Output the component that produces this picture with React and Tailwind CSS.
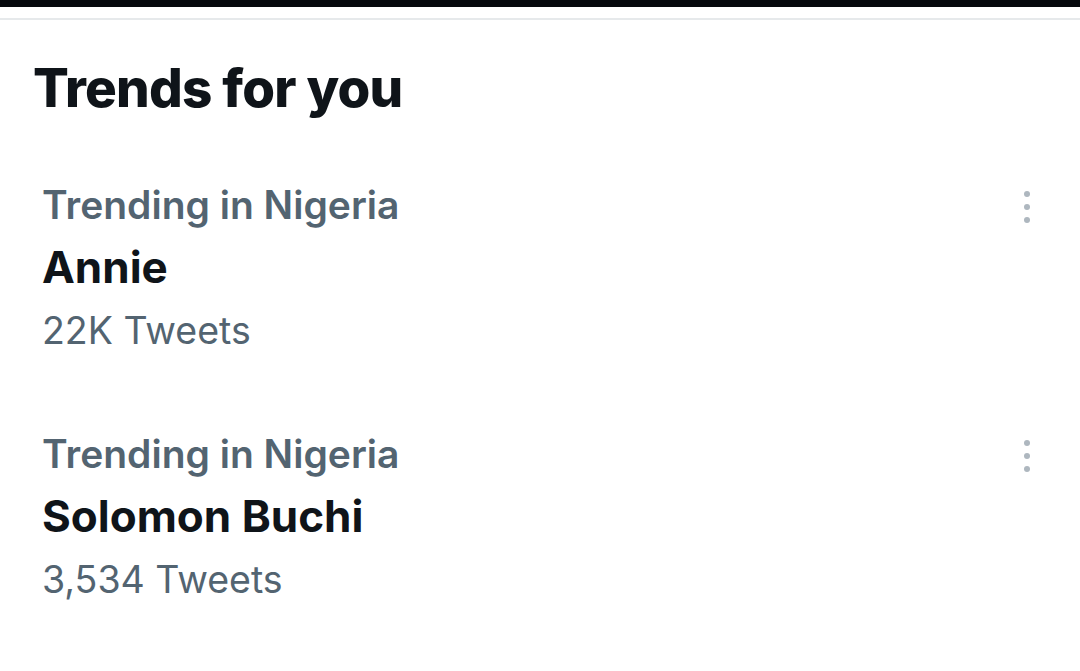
import React from 'react'

const trends = [
    { context: 'Trending in Nigeria', name: 'Annie', count: '22K Tweets' },
    { context: 'Trending in Nigeria', name: 'Solomon Buchi', count: '3,534 Tweets' },
]

const MoreDots = () => (
    <div className="flex flex-col items-center gap-[7px] pt-[18px]">
        <span className="w-[6px] h-[6px] rounded-full bg-[#aeb7bf]" />
        <span className="w-[6px] h-[6px] rounded-full bg-[#aeb7bf]" />
        <span className="w-[6px] h-[6px] rounded-full bg-[#aeb7bf]" />
    </div>
)

const TrendItem = ({ context, name, count }) => (
    <div className="flex items-start justify-between pl-[42px] pr-[50px] h-[249px]">
        <div className="flex flex-col">
            <span className="text-[39px] leading-[63px] font-semibold text-[#536471]">{context}</span>
            <span className="text-[44px] leading-[63px] font-bold text-[#0f1419]">{name}</span>
            <span className="text-[37.5px] leading-[63px] text-[#536471]">{count}</span>
        </div>
        <MoreDots />
    </div>
)

export default function App() {
    return (
        <div className="w-[1080px] h-[671px] bg-white overflow-hidden" style={{ fontFamily: 'Inter, "Noto Sans", sans-serif' }}>
            <div className="h-[7px] bg-[#05080d]" />
            <div className="h-[11px] bg-white" />
            <div className="h-[2px] bg-[#e6e9eb]" />
            <div className="pl-[33px] pt-[34px] pb-[51px]">
                <h1 className="text-[53px] leading-[68px] font-extrabold text-[#0f1419] tracking-[-0.8px]">Trends for you</h1>
            </div>
            <div>
                {trends.map((t, i) => (
                    <TrendItem key={i} {...t} />
                ))}
            </div>
        </div>
    )
}
